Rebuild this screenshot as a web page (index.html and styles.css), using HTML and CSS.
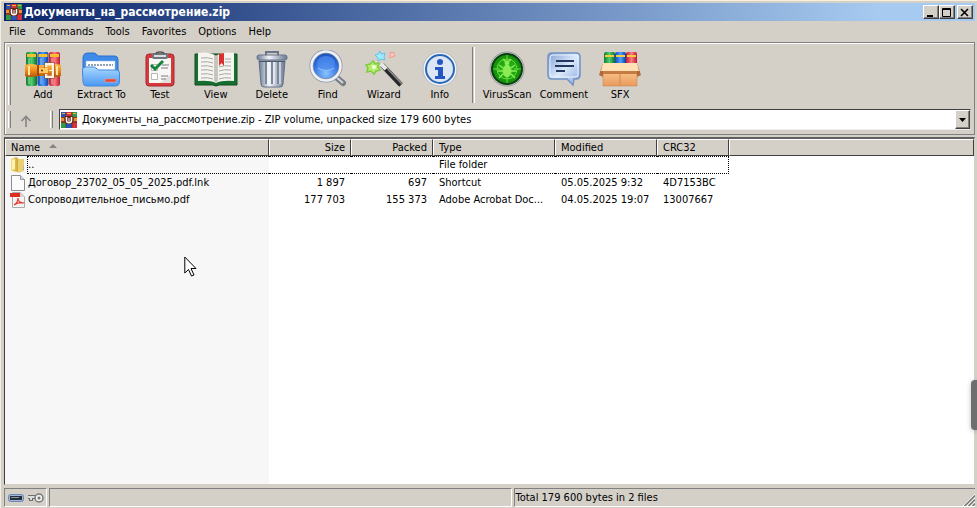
FILE: index.html
```html
<!DOCTYPE html>
<html lang="en">
<head>
  <meta charset="UTF-8">
  <meta name="viewport" content="width=device-width, initial-scale=1.0">
  <title>Документы_на_рассмотрение.zip</title>
  <link rel="stylesheet" href="styles.css">
</head>
<body>
  <!-- Shared gradients and the archive icon -->
  <svg class="defs" width="0" height="0" aria-hidden="true">
    <defs>
      <linearGradient id="green" x1="0" x2="1"><stop offset="0" stop-color="#157a35"/><stop offset=".5" stop-color="#4fd06d"/><stop offset="1" stop-color="#0f6a2b"/></linearGradient>
      <linearGradient id="blue" x1="0" x2="1"><stop offset="0" stop-color="#1646b4"/><stop offset=".5" stop-color="#4aa0ff"/><stop offset="1" stop-color="#123a9c"/></linearGradient>
      <linearGradient id="red" x1="0" x2="1"><stop offset="0" stop-color="#c01a2c"/><stop offset=".5" stop-color="#ff7b83"/><stop offset="1" stop-color="#b81b33"/></linearGradient>
      <linearGradient id="gold" x1="0" y1="0" x2="0" y2="1"><stop offset="0" stop-color="#ffc04a"/><stop offset=".5" stop-color="#f08a1c"/><stop offset="1" stop-color="#b9570c"/></linearGradient>
      <linearGradient id="sky" x1="0" y1="0" x2="0" y2="1"><stop offset="0" stop-color="#a9d8ff"/><stop offset="1" stop-color="#4a97f2"/></linearGradient>
      <linearGradient id="steel" x1="0" x2="1"><stop offset="0" stop-color="#6d7b92"/><stop offset=".4" stop-color="#f2f6fb"/><stop offset="1" stop-color="#6a7890"/></linearGradient>
      <linearGradient id="bubble" x1="0" y1="0" x2="1" y2="1"><stop offset="0" stop-color="#7f9fcf"/><stop offset=".5" stop-color="#dbe9fb"/><stop offset="1" stop-color="#86a6d8"/></linearGradient>
      <linearGradient id="card" x1="0" y1="0" x2="0" y2="1"><stop offset="0" stop-color="#ffd9a3"/><stop offset="1" stop-color="#e99a5c"/></linearGradient>
      <linearGradient id="folder" x1="0" x2="1"><stop offset="0" stop-color="#f5df7a"/><stop offset="1" stop-color="#cfa739"/></linearGradient>
      <radialGradient id="lens" cx=".5" cy=".75" r=".75"><stop offset="0" stop-color="#8cc4ff"/><stop offset=".6" stop-color="#2f6fe0"/><stop offset="1" stop-color="#1745ae"/></radialGradient>
      <radialGradient id="scan"><stop offset="0" stop-color="#35c51c"/><stop offset="1" stop-color="#108a08"/></radialGradient>
    </defs>
    <symbol id="archive" viewBox="0 0 16 16">
      <path fill="#2a54b8" d="M0 0h5v6H0z"/><path fill="#d8303c" d="M5 0h6v6H5z"/><path fill="#2f9b47" d="M11 0h5v6h-5z"/>
      <path fill="#2f9b47" d="M0 10h5v6H0z"/><path fill="#2a54b8" d="M5 11h6v5H5z"/><path fill="#d8303c" d="M11 10h5v6h-5z"/>
      <path fill="#f3b23c" d="M1 1h3v1H1zM6 1h4v1H6zM12 1h3v1h-3z"/>
      <path fill="#8c3c1c" d="M0 5h16v6H0z"/><path fill="#e99238" d="M0 6h3v3H0zM13 6h3v3h-3z"/>
      <path fill="#6b2418" d="M4 4h8v7l-1 1H5l-1-1z"/>
      <path fill="none" stroke="#fff" stroke-width="1.500" d="M5.500 5v3.500c0 3 5 3 5 0V5"/><path stroke="#fff" d="M8 6v4"/>
      <path stroke="#502020" stroke-width=".5" d="M5 0v4M11 0v4M5 12v4M11 12v4"/>
    </symbol>
  </svg>

  <div class="window">
    <header class="title-bar">
      <svg width="16" height="16"><use href="#archive"/></svg>
      <h1 class="title">Документы_на_рассмотрение.zip</h1>
      <div class="window-buttons">
        <button class="window-button" aria-label="Minimize"><svg width="10" height="9"><path d="M1 7h6v2H1z"/></svg></button>
        <button class="window-button" aria-label="Maximize"><svg width="10" height="9"><path fill="none" stroke="#000" d="M.5.5h8v8h-8zM1 1.500h8"/></svg></button>
        <button class="window-button close" aria-label="Close"><svg width="10" height="9"><path fill="none" stroke="#000" stroke-width="1.600" d="M1 1l7 7M8 1L1 8"/></svg></button>
      </div>
    </header>

    <nav class="menu">
      <a href="#">File</a>
      <a href="#">Commands</a>
      <a href="#">Tools</a>
      <a href="#">Favorites</a>
      <a href="#">Options</a>
      <a href="#">Help</a>
    </nav>

    <div class="bands">
      <div class="toolbar">
        <span class="grip"></span>
        <button class="tool">
          <svg width="36" height="36" viewBox="0 0 36 36">
            <rect x="1" y="1" width="11" height="34" rx="2" fill="url(#green)"/><rect x="12.500" y="1" width="11" height="34" rx="2" fill="url(#blue)"/><rect x="24" y="1" width="11" height="34" rx="2" fill="url(#red)"/>
            <path fill="#f5c02f" d="M2 3h9v3H2zM13.500 3h9v3h-9zM25 3h9v3h-9z"/><path fill="#dff2e4" opacity=".3" d="M3 7h2v26H3zM15 7h2v26h-2zM26 7h2v26h-2z"/>
            <path fill="url(#gold)" d="M0 14q6-2 12 0h12q6-2 12 0v11q-6 2-12 0H12q-6 2-12 0z"/><path fill="#a5480b" d="M12 14h2v11h-2z"/>
            <path fill="none" stroke="#f7f1e4" stroke-width="2.500" d="M21 16v-3h7v13h-7v-3"/><path fill="none" stroke="#6a2c0d" stroke-width=".5" d="M19.500 17v-5.500h10v16h-10V23"/>
            <path fill="#ffcb64" d="M14 17h9v5h-9z"/><path stroke="#ffe3a0" stroke-width="2" d="M4 15v9M32 15v9"/><path stroke="#fff4d8" d="M24 19.500h3"/><circle cx="17" cy="19.500" r="1" fill="#713408"/>
          </svg>
          <span>Add</span>
        </button>
        <button class="tool">
          <svg width="38" height="36" viewBox="0 0 38 36">
            <path fill="#3f8bea" stroke="#2c6fca" d="M1 7q0-5 5-5h6q2 0 4 3h17q3 0 3 4v15H1z"/>
            <path fill="#fff" stroke="#9bb4cd" stroke-width=".5" d="M4 10h29v12H4z"/>
            <path stroke="#8fa2b8" stroke-width="2" stroke-dasharray="2 1" d="M6 14h25"/>
            <path fill="url(#sky)" stroke="#4089df" d="M.5 19q0-3 3-3h9l4 3h18q3 0 3 3v9q0 4-4 4H5q-4 0-4-4z"/>
            <rect x="23" y="28" width="11" height="3" fill="#e8452f" stroke="#f3a99c" stroke-width=".5"/>
          </svg>
          <span>Extract To</span>
        </button>
        <button class="tool">
          <svg width="36" height="36" viewBox="0 0 36 36">
            <rect x="4" y="3" width="28" height="32" rx="3" fill="#d83a3c" stroke="#a82430"/><path fill="#f7f7f5" d="M7 7h22v25H7z"/>
            <path fill="#dedede" d="M29 23v9H18z"/><rect x="10" y="2" width="16" height="6" rx="2" fill="#70757b"/><path fill="#d9dde0" d="M12 4h12v2H12z"/><path fill="none" stroke="#555" stroke-width="1.500" d="M14 3q0-2 4-2t4 2"/>
            <path fill="#fff" stroke="#b8b8b8" d="M9.500 13.500h6v6h-6zM9.500 22.500h6v6h-6z"/><path stroke="#a5a5a5" stroke-width="1.500" d="M20 14h7M19 17h7M19 25h7M19 28h5"/>
            <path fill="none" stroke="#16833b" stroke-width="3" d="M9 14l4 4 8-8"/>
          </svg>
          <span>Test</span>
        </button>
        <button class="tool">
          <svg width="44" height="36" viewBox="0 0 44 36">
            <path fill="#176e31" stroke="#0e4d20" d="M1 3h42v31H25l-3 1-3-1H1z"/>
            <path fill="#f5f4ee" d="M4 2q12-2 18 3 6-5 18-3v28q-12-1-18 2-6-3-18-2z"/><path fill="#c6c5bf" d="M20 4l2 1 2-1v26l-2 2-2-2z"/>
            <path fill="none" stroke="#a7a6a2" d="M7 7q7-1 12 1M7 11q7-1 12 1M7 15q7-1 12 1M7 19q7-1 12 1M7 23q7-1 12 1M7 27q7-1 12 1M25 16q5-2 12-1M25 20q5-2 12-1M25 24q5-2 12-1M25 28q5-2 12-1M31 8h6M31 11h6"/>
            <path fill="#db2f32" d="M25 3l5-1v13l-2.500-3-2.500 3z"/>
          </svg>
          <span>View</span>
        </button>
        <button class="tool">
          <svg width="36" height="38" viewBox="0 0 36 38">
            <path fill="none" stroke="#69758a" stroke-width="2" d="M12 5V2h12v3"/><path fill="url(#steel)" stroke="#63718a" d="M5 11h26l-2 23q0 3-3 3H10q-3 0-3-3z"/>
            <path stroke="#7b879b" stroke-width="2" d="M12 12v22M18 12v22M24 12v22"/><path stroke="#fff" d="M14 12v22M20 12v22M26 12v22"/>
            <rect x="3" y="5" width="30" height="5" rx="2" fill="url(#steel)" stroke="#69768c"/><path stroke="#4b5870" d="M5 11.500h26"/>
          </svg>
          <span>Delete</span>
        </button>
        <button class="tool">
          <svg width="38" height="38" viewBox="0 0 38 38">
            <path stroke="#777b84" stroke-width="6" stroke-linecap="round" d="M27 27l7 6"/><path stroke="#d4d7dc" stroke-width="2" d="M26 26l8 7"/>
            <circle cx="17" cy="16" r="14.500" fill="url(#lens)" stroke="#8994a6" stroke-width="4"/><circle cx="17" cy="16" r="14.500" fill="none" stroke="#eef2f7" stroke-width="2.500"/>
            <ellipse cx="17" cy="13" rx="9" ry="7" fill="#4f8bee" opacity=".7"/><path fill="none" stroke="#89bfff" d="M9 18q8 5 16 0"/>
          </svg>
          <span>Find</span>
        </button>
        <button class="tool">
          <svg width="38" height="38" viewBox="0 0 38 38">
            <path stroke="#28282a" stroke-width="5" d="M17 15l19 20"/><path stroke="#8e8e90" stroke-width="1.500" d="M18 14l19 20"/><path stroke="#e7e7e5" stroke-width="4" d="M16 14l5 5"/>
            <path fill="#b8ee70" stroke="#7ccc3e" stroke-width="1.500" d="M8 11l2 3 4-1-1 4 2 3-4 1-2 3-3-3-4 1 1-4-2-3 4-1z"/>
            <path fill="#9eeaff" stroke="#64c0ec" d="M15 1l1 3 4-1-1 4 1 3-4-1-3 2v-3l-3-3 3-1z"/>
            <path fill="#ffc6bd" stroke="#f09a90" d="M25 2l2 1 2-1v2l1 2-3 1-2 1v-3z"/><circle cx="9" cy="17" r="2" fill="#f5ffdc"/>
          </svg>
          <span>Wizard</span>
        </button>
        <button class="tool">
          <svg width="36" height="36" viewBox="0 0 36 36">
            <circle cx="18" cy="18" r="17" fill="#f1f3f6" stroke="#b4bac4"/><circle cx="18" cy="18" r="14" fill="#dce6f4" stroke="#2a67b5" stroke-width="2"/>
            <circle cx="18" cy="11" r="3" fill="#2358c2"/><path fill="#2358c2" d="M13 16h8v9h2v3H13v-3h3v-6h-3z"/>
          </svg>
          <span>Info</span>
        </button>
        <span class="divider"></span>
        <button class="tool">
          <svg width="36" height="36" viewBox="0 0 36 36">
            <circle cx="18" cy="18" r="17" fill="#d9dcda" stroke="#8e9690"/><circle cx="18" cy="18" r="15" fill="url(#scan)" stroke="#0d3d14" stroke-width="2"/>
            <circle cx="18" cy="18" r="10" fill="none" stroke="#62dc3f"/><path stroke="#62dc3f" d="M18 4v7M18 26v6M4 18h7M25 18h7"/>
            <g fill="#8bec55" stroke="#8bec55"><ellipse cx="18" cy="20" rx="4" ry="6"/><circle cx="18" cy="12" r="2"/><path fill="none" stroke-width="1.500" d="M14 17l-4-3M22 17l4-3M14 20H9M22 20h5M14 23l-4 4M22 23l4 4M17 11l-3-3M19 11l3-3"/></g>
          </svg>
          <span>VirusScan</span>
        </button>
        <button class="tool">
          <svg width="36" height="36" viewBox="0 0 36 36">
            <path fill="url(#bubble)" stroke="#6f91c6" stroke-width="1.500" d="M6 2h24q4 0 4 4v18q0 4-4 4h-2l-1 6-6-6H6q-4 0-4-4V6q0-4 4-4z"/>
            <path fill="none" stroke="#e7f1ff" d="M7 4h22q3 0 3 3v16q0 3-3 3H7q-3 0-3-3V7q0-3 3-3z"/><path stroke="#24395f" stroke-width="2" d="M10 10h18M9 15h19M10 20h9"/>
          </svg>
          <span>Comment</span>
        </button>
        <button class="tool">
          <svg width="42" height="36" viewBox="0 0 42 36">
            <rect x="5" y="1" width="11" height="15" rx="2" fill="url(#green)"/><rect x="16" y="1" width="11" height="15" rx="2" fill="url(#blue)"/><rect x="27" y="1" width="11" height="15" rx="2" fill="url(#red)"/>
            <path fill="#f7ce39" d="M6 4h9v2H6zM17 4h9v2h-9zM28 4h9v2h-9z"/><path fill="url(#card)" stroke="#c8824c" stroke-width=".5" d="M4 13h34v22H4z"/>
            <path fill="#b26a3d" d="M4 12l-4 12 4 2zM38 12l4 12-4 2z"/><path fill="#ffe1b5" d="M4 12h34l2 8H2z"/><path fill="#c57a44" d="M4 20h34v3H4z"/><path stroke="#d7884e" d="M21 23v12"/>
          </svg>
          <span>SFX</span>
        </button>
      </div>

      <div class="address-bar">
        <span class="grip"></span>
        <button class="up" aria-label="Up one level"><svg width="12" height="12"><path fill="none" stroke="#858585" stroke-width="1.600" d="M6 12V2M1.500 6L6 1.500 10.500 6"/></svg></button>
        <span class="grip"></span>
        <div class="address">
          <svg width="16" height="16"><use href="#archive"/></svg>
          <select class="path" aria-label="Current archive">
            <option>Документы_на_рассмотрение.zip - ZIP volume, unpacked size 179 600 bytes</option>
          </select>
          <span class="drop"><svg width="7" height="4"><path d="M0 0h7L3.500 4z"/></svg></span>
        </div>
      </div>
    </div>

    <main class="list">
      <table class="files">
        <colgroup>
          <col class="col-name"><col class="col-size"><col class="col-packed"><col class="col-type"><col class="col-modified"><col class="col-crc"><col>
        </colgroup>
        <thead>
          <tr>
            <th>Name <svg class="sort" width="8" height="4"><path fill="#858585" d="M0 4h8L4 0z"/></svg></th>
            <th class="number">Size</th>
            <th class="number">Packed</th>
            <th>Type</th>
            <th>Modified</th>
            <th>CRC32</th>
            <th></th>
          </tr>
        </thead>
        <tbody>
          <tr class="parent">
            <td><div class="name"><svg width="16" height="16"><path fill="url(#folder)" d="M1 2l5-2 2 1v14l-7-1z"/><path fill="#ead071" d="M8 2h6v12l-6 2z"/><path fill="#fff2b0" d="M2 3l3-1v10l-3 1z"/><path fill="#a9b8c4" d="M13 9h1v4h-1z"/></svg><span class="focused">..</span></div></td>
            <td></td>
            <td></td>
            <td>File folder</td>
            <td></td>
            <td></td>
            <td></td>
          </tr>
          <tr>
            <td><div class="name"><svg width="16" height="16"><path fill="#fbfbfb" stroke="#8c8c8c" d="M1.500.5h9l4 4v11h-13z"/><path fill="#ddd" stroke="#999" d="M10.500.5v4h4"/></svg><span>Договор_23702_05_05_2025.pdf.lnk</span></div></td>
            <td class="number">1 897</td>
            <td class="number">697</td>
            <td>Shortcut</td>
            <td>05.05.2025 9:32</td>
            <td>4D7153BC</td>
            <td></td>
          </tr>
          <tr>
            <td><div class="name"><svg width="16" height="16"><path fill="#f3f3f3" stroke="#aaa" d="M2.500.5h8l4 4v11h-12z"/><path fill="#d6d6d6" d="M10 0v5h5z"/><path fill="#e02b20" d="M0 1h10v4H0z"/><path fill="none" stroke="#e23a30" stroke-width="1.200" d="M4 13c3-2 4-4 4-7 0 4 2 5 6 5-4-1-7 0-10 2z"/></svg><span>Сопроводительное_письмо.pdf</span></div></td>
            <td class="number">177 703</td>
            <td class="number">155 373</td>
            <td>Adobe Acrobat Doc...</td>
            <td>04.05.2025 19:07</td>
            <td>13007667</td>
            <td></td>
          </tr>
        </tbody>
      </table>
      <div class="name-shade"></div>
    </main>

    <footer class="status-bar">
      <div class="pane icons">
        <svg width="16" height="10"><rect x=".5" y="1.500" width="15" height="7" rx="2" fill="#9eb6d6" stroke="#7189ac"/><path fill="#27313e" d="M2 3h12v4H2z"/><path fill="#8794a4" d="M3 4h8v1H3z"/></svg>
        <svg width="17" height="12"><path fill="none" stroke="#6c6c6c" stroke-width="4" d="M9 5H1M4 5v4"/><path stroke="#ddd" stroke-width="2" d="M9 5H1M4 5v3"/><circle cx="12" cy="6" r="4" fill="#eee" stroke="#777" stroke-width="1.500"/><circle cx="12" cy="6" r="1.500" fill="#777"/></svg>
      </div>
      <div class="pane"></div>
      <div class="pane last">Total 179 600 bytes in 2 files
        <svg class="resize" width="12" height="12"><path stroke="#fff" d="M0 12L12 0M4 12l8-8M8 12l4-4"/><path stroke="#777" stroke-width="1.500" d="M1.500 12L12 1.500M5.500 12L12 5.500M9.500 12L12 9.500"/></svg>
      </div>
    </footer>
  </div>

  <div class="side-handle"></div>
  <svg class="cursor" width="13" height="21" viewBox="0 0 13 21"><path fill="#fff" stroke="#000" d="M.8 1v16l3.700-3.500 3 6.500 2.500-1-3-6.500h5z"/></svg>
</body>
</html>
```
FILE: styles.css
```css
body, html {
  margin: 0;
  padding: 0;
  height: 100%;
  font-family: Tahoma, "DejaVu Sans Condensed", "DejaVu Sans", sans-serif;
  font-size: 11px;
  color: #000;
}
body {
  position: relative;
  overflow: hidden;
}
button, select {
  font: inherit;
  color: inherit;
}
svg {
  display: block;
  flex: none;
}
.defs {
  position: absolute;
}
.window {
  box-sizing: border-box;
  height: 100%;
  display: flex;
  flex-direction: column;
  padding: 2px 2px 0 3px;
  background-color: #d4d0c8;
  border-top: 1px solid #f8f0da;
  border-left: 1px solid #f4eee2;
}

/* Title bar */
.title-bar {
  display: flex;
  align-items: center;
  height: 18px;
  padding: 0 2px;
  background: linear-gradient(90deg, #0a246a, #a6caf0 90%);
}
.title {
  margin: 0 0 0 2px;
  flex: 1;
  font-size: 12px;
  line-height: 18px;
  color: white;
}
.window-buttons {
  display: flex;
}
.window-button {
  width: 16px;
  height: 14px;
  padding: 0;
  display: flex;
  align-items: center;
  justify-content: center;
  background-color: #d4d0c8;
  border: 1px solid;
  border-color: #fff #404040 #404040 #fff;
  box-shadow: inset -1px -1px #808080;
}
.close {
  margin-left: 2px;
}

.menu {
  display: flex;
  gap: 12px;
  padding: 0 5px;
  line-height: 21px;
}
.menu a {
  color: inherit;
  text-decoration: none;
}

/* Toolbar and address bands */
.bands {
  border: 1px solid #808080;
  box-shadow: inset 1px 1px #fff;
  padding: 2px;
}
.toolbar {
  display: flex;
  align-items: stretch;
  height: 64px;
}
.grip {
  width: 1px;
  margin: 2px 4px 4px 1px;
  border-left: 1px solid #fff;
  border-right: 1px solid #808080;
}
.tool {
  min-width: 56px;
  padding: 5px 6px 0;
  display: flex;
  flex-direction: column;
  align-items: center;
  background: none;
  border: none;
  line-height: 14px;
}
.tool svg {
  height: 38px;
}
.divider {
  width: 1px;
  margin: 2px 4px 6px 4px;
  border-left: 1px solid #808080;
  border-right: 1px solid #fff;
}
.divider ~ .tool {
  padding: 5px 4px 0;
}
.address-bar {
  display: flex;
  align-items: stretch;
  height: 23px;
}
.up {
  width: 34px;
  padding: 0 0 0 5px;
  background: none;
  border: none;
}
.address {
  flex: 1;
  display: flex;
  align-items: center;
  margin: 0 1px 2px 2px;
  padding-left: 1px;
  background-color: white;
  border: 1px solid #404040;
  border-right-color: #d4d0c8;
  border-bottom-color: #eee;
}
.path {
  flex: 1;
  margin-left: 5px;
  padding: 0;
  appearance: none;
  background: none;
  border: none;
}
.drop {
  width: 13px;
  align-self: stretch;
  display: flex;
  align-items: center;
  justify-content: center;
  background-color: #d4d0c8;
  border: 1px solid;
  border-color: #fff #404040 #404040 #fff;
  box-shadow: inset -1px -1px #808080;
}

/* File list */
.list {
  flex: 1;
  display: flex;
  flex-direction: column;
  margin-top: 2px;
  background-color: white;
  border: 1px solid #808080;
  border-top: 2px solid #606060;
  border-left-color: #404040;
  border-right-color: #d4d0c8;
  border-bottom-color: #d4d0c8;
}
.files {
  width: 100%;
  table-layout: fixed;
  border-collapse: separate;
  border-spacing: 0;
}
.col-name {
  width: 264px;
}
.col-size, .col-packed {
  width: 82px;
}
.col-type {
  width: 122px;
}
.col-modified {
  width: 102px;
}
.col-crc {
  width: 72px;
}
.files th {
  height: 15px;
  padding: 0 5px;
  font-weight: normal;
  text-align: left;
  line-height: 15px;
  background-color: #d4d0c8;
  border: 1px solid;
  border-color: #fff #404040 #404040 #fff;
}
.files td {
  height: 17px;
  padding: 0 6px;
  line-height: 17px;
  white-space: nowrap;
}
.files th.number, .files td.number {
  text-align: right;
}
.files td:first-child {
  padding: 0 0 0 5px;
  background-color: #f7f7f7;
}
.files .parent td:nth-child(n+2):nth-child(-n+6) {
  height: 16px;
  line-height: 16px;
  border-top: 1px dotted #000;
  border-bottom: 1px dotted #000;
}
.files .parent td:nth-child(6) {
  border-right: 1px dotted #000;
}
.sort {
  display: inline-block;
  margin: 0 0 3px 6px;
}
.name {
  display: flex;
  align-items: center;
  gap: 2px;
}
.name .focused {
  flex: 1;
  margin-left: -1px;
  line-height: 16px;
  border: 1px dotted #000;
  border-right: none;
}
.name-shade {
  flex: 1;
  width: 264px;
  background-color: #f7f7f7;
}

/* Status bar */
.status-bar {
  display: flex;
  gap: 2px;
  padding: 3px 0 1px;
}
.pane {
  flex: 1;
  height: 17px;
  line-height: 17px;
  padding-left: 1px;
  border: 1px solid;
  border-color: #808080 #fff #fff #808080;
}
.pane.icons {
  flex: none;
  display: flex;
  align-items: center;
  gap: 3px;
  padding: 0 2px 0 3px;
}
.pane.last {
  display: flex;
  justify-content: space-between;
  align-items: flex-end;
  border-right: none;
}

/* Drawn over the window */
.side-handle {
  position: absolute;
  right: 0;
  top: 380px;
  width: 6px;
  height: 50px;
  background-color: #6f6f6f;
  border-radius: 4px 0 0 4px;
  box-shadow: 0 1px 5px rgba(0,0,0,0.25);
}
.cursor {
  position: absolute;
  left: 184px;
  top: 256px;
}
```
